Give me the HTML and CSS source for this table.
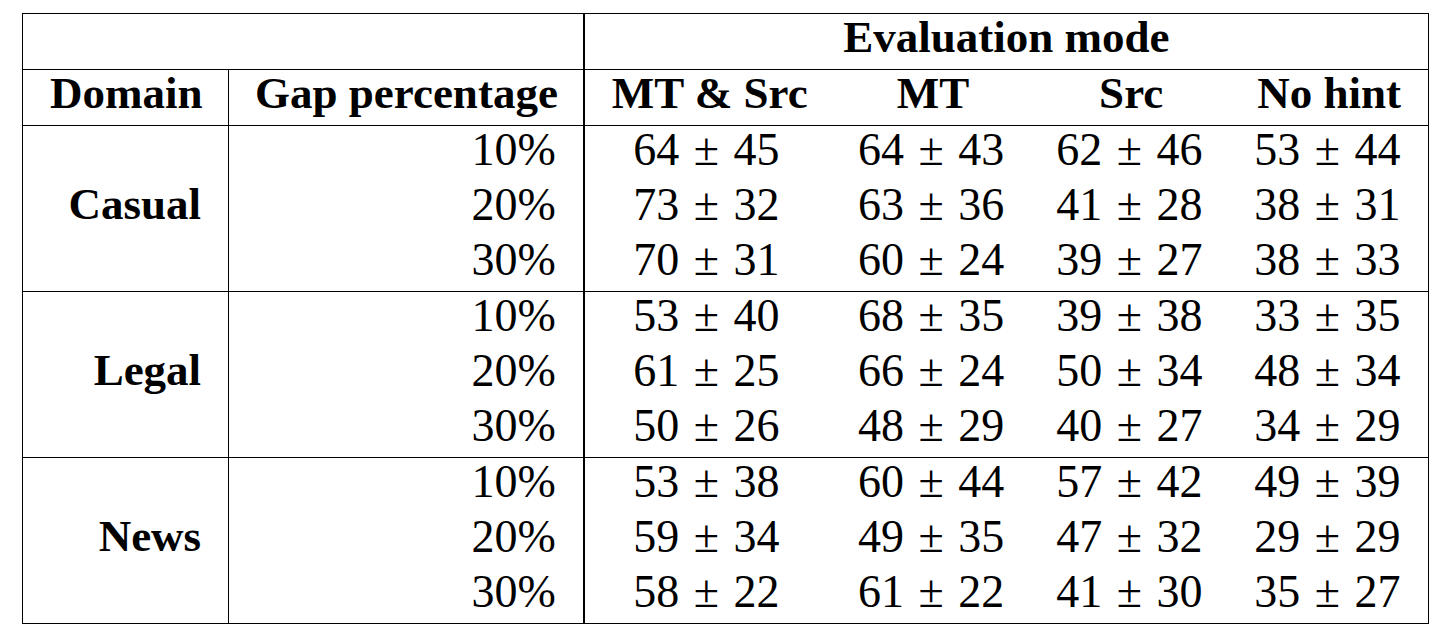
FILE: index.html
```html
<!DOCTYPE html>
<html lang="en">
<head>
<meta charset="utf-8">
<title>Evaluation mode results</title>
<link rel="stylesheet" href="styles.css">
</head>
<body>
<table class="results">
  <colgroup>
    <col class="col-domain">
    <col class="col-gap">
    <col class="col-wide">
    <col class="col-mode">
    <col class="col-mode">
    <col class="col-mode">
  </colgroup>
  <thead>
    <tr>
      <th class="blank" colspan="2"></th>
      <th class="group sep" colspan="4">Evaluation mode</th>
    </tr>
    <tr>
      <th class="right">Domain</th>
      <th class="right vline gaphead">Gap percentage</th>
      <th class="center sep">MT &amp; Src</th>
      <th class="center">MT</th>
      <th class="center">Src</th>
      <th class="center">No hint</th>
    </tr>
  </thead>
  <tbody>
    <tr>
      <th class="domain" rowspan="3">Casual</th>
      <td class="pct vline">10%</td>
      <td class="num sep">64 ± 45</td><td class="num">64 ± 43</td><td class="num">62 ± 46</td><td class="num">53 ± 44</td>
    </tr>
    <tr>
      <td class="pct vline">20%</td>
      <td class="num sep">73 ± 32</td><td class="num">63 ± 36</td><td class="num">41 ± 28</td><td class="num">38 ± 31</td>
    </tr>
    <tr>
      <td class="pct vline">30%</td>
      <td class="num sep">70 ± 31</td><td class="num">60 ± 24</td><td class="num">39 ± 27</td><td class="num">38 ± 33</td>
    </tr>
  </tbody>
  <tbody>
    <tr>
      <th class="domain" rowspan="3">Legal</th>
      <td class="pct vline">10%</td>
      <td class="num sep">53 ± 40</td><td class="num">68 ± 35</td><td class="num">39 ± 38</td><td class="num">33 ± 35</td>
    </tr>
    <tr>
      <td class="pct vline">20%</td>
      <td class="num sep">61 ± 25</td><td class="num">66 ± 24</td><td class="num">50 ± 34</td><td class="num">48 ± 34</td>
    </tr>
    <tr>
      <td class="pct vline">30%</td>
      <td class="num sep">50 ± 26</td><td class="num">48 ± 29</td><td class="num">40 ± 27</td><td class="num">34 ± 29</td>
    </tr>
  </tbody>
  <tbody>
    <tr>
      <th class="domain" rowspan="3">News</th>
      <td class="pct vline">10%</td>
      <td class="num sep">53 ± 38</td><td class="num">60 ± 44</td><td class="num">57 ± 42</td><td class="num">49 ± 39</td>
    </tr>
    <tr>
      <td class="pct vline">20%</td>
      <td class="num sep">59 ± 34</td><td class="num">49 ± 35</td><td class="num">47 ± 32</td><td class="num">29 ± 29</td>
    </tr>
    <tr>
      <td class="pct vline">30%</td>
      <td class="num sep">58 ± 22</td><td class="num">61 ± 22</td><td class="num">41 ± 30</td><td class="num">35 ± 27</td>
    </tr>
  </tbody>
</table>
</body>
</html>
```
FILE: styles.css
```css
html, body {
  background: #ffffff;
}

body {
  margin: 0;
  padding: 13px 0 0 22px;
  font-family: "Liberation Serif", "Times New Roman", serif;
  font-size: 46px;
  color: #000000;
}

.results {
  border-collapse: collapse;
  table-layout: fixed;
  width: 1407px;
  border: 1px solid #000000;
}

.col-domain { width: 206px; }
.col-gap { width: 355px; }
.col-wide { width: 250px; }
.col-mode { width: 198px; }

.results th,
.results td {
  padding: 0 27px 8px;
  line-height: 47px;
  height: 47px;
  white-space: nowrap;
}

.results td {
  word-spacing: 3px;
}

.results th {
  font-weight: bold;
  font-size: 45px;
}

.results thead tr {
  border-bottom: 1px solid #000000;
}

.results tbody {
  border-bottom: 1px solid #000000;
}

.results .group {
  text-align: center;
}

.results .right {
  text-align: right;
}

.results .gaphead {
  padding-left: 20px;
  padding-right: 25px;
}

.results .center {
  text-align: center;
}

.results .vline {
  border-left: 1px solid #000000;
}

.results .sep {
  border-left: 2px solid #000000;
}

.results .domain {
  text-align: right;
  vertical-align: middle;
}

.results .pct {
  text-align: right;
  padding-right: 27px;
}

.results .num {
  text-align: center;
  padding-left: 24px;
  padding-right: 30px;
}
```
